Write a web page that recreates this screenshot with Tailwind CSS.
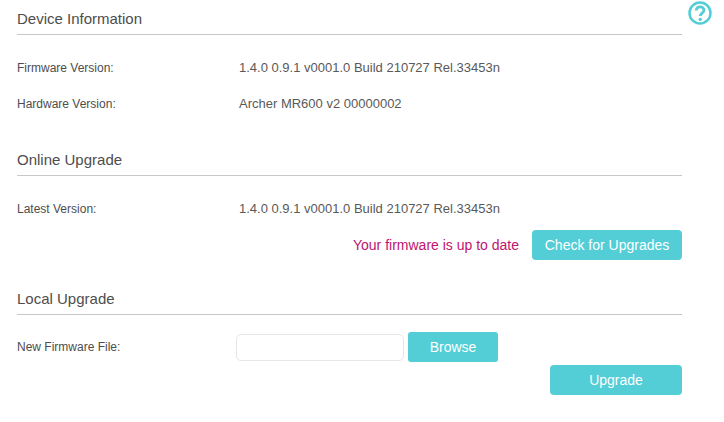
<!DOCTYPE html>
<html lang="en">
  <head>
    <meta charset="UTF-8" />
    <meta name="viewport" content="width=device-width, initial-scale=1.0" />
    <title>Firmware Upgrade</title>
    <script src="https://cdn.jsdelivr.net/npm/@tailwindcss/browser@4"></script>
  </head>
  <body class="relative h-[422px] w-[724px] overflow-hidden bg-white font-['Liberation_Sans',Arial,sans-serif] text-[#4d4d4d]">
    <!-- Help icon -->
    <svg class="absolute left-[688px] top-[1px] h-[24px] w-[24px]" viewBox="0 0 24 24" fill="none" stroke="#53cdd6">
      <circle cx="12" cy="12" r="10.5" stroke-width="2.5" />
      <path d="M8.2 9.6c0-2.3 1.7-3.7 3.9-3.7s3.9 1.4 3.9 3.3c0 2.8-3.8 2.9-3.8 5.9" stroke-width="2.8" />
      <circle cx="12.2" cy="18.4" r="1.7" fill="#53cdd6" stroke="none" />
    </svg>

    <main class="ml-[17px] w-[665px]">
      <!-- Device Information -->
      <section class="h-[150px] pt-[9px]">
        <h2 class="h-[26px] border-b border-[#c8c8c8] text-[15px] leading-[20px]">Device Information</h2>
        <div class="mt-[24px] flex h-[18px] items-center">
          <span class="w-[222px] text-[12px]">Firmware Version:</span>
          <span class="text-[13px] text-[#595959]">1.4.0 0.9.1 v0001.0 Build 210727 Rel.33453n</span>
        </div>
        <div class="mt-[18px] flex h-[18px] items-center">
          <span class="w-[222px] text-[12px]">Hardware Version:</span>
          <span class="text-[13px] text-[#595959]">Archer MR600 v2 00000002</span>
        </div>
      </section>

      <!-- Online Upgrade -->
      <section class="h-[139px]">
        <h2 class="h-[26px] border-b border-[#c8c8c8] text-[15px] leading-[20px]">Online Upgrade</h2>
        <div class="mt-[24px] flex h-[18px] items-center">
          <span class="w-[222px] text-[12px]">Latest Version:</span>
          <span class="text-[13px] text-[#595959]">1.4.0 0.9.1 v0001.0 Build 210727 Rel.33453n</span>
        </div>
        <div class="mt-[12px] flex items-center justify-end gap-[13px]">
          <span class="text-[14px] text-[#c0136f]">Your firmware is up to date</span>
          <button class="h-[30px] w-[150px] rounded-[4px] bg-[#53cdd6] text-[14px] text-white">Check for Upgrades</button>
        </div>
      </section>

      <!-- Local Upgrade -->
      <section>
        <h2 class="h-[26px] border-b border-[#c8c8c8] text-[15px] leading-[20px]">Local Upgrade</h2>
        <div class="mt-[17px] flex h-[30px] items-center">
          <span class="w-[219px] text-[12px]">New Firmware File:</span>
          <input type="text" class="h-[27px] w-[168px] rounded-[5px] border border-[#e6e6e6] bg-white" />
          <button class="ml-[4px] h-[30px] w-[90px] rounded-[3px] bg-[#53cdd6] text-[14px] text-white">Browse</button>
        </div>
        <div class="mt-[3px] flex justify-end">
          <button class="h-[30px] w-[132px] rounded-[4px] bg-[#53cdd6] text-[14px] text-white">Upgrade</button>
        </div>
      </section>
    </main>
  </body>
</html>
